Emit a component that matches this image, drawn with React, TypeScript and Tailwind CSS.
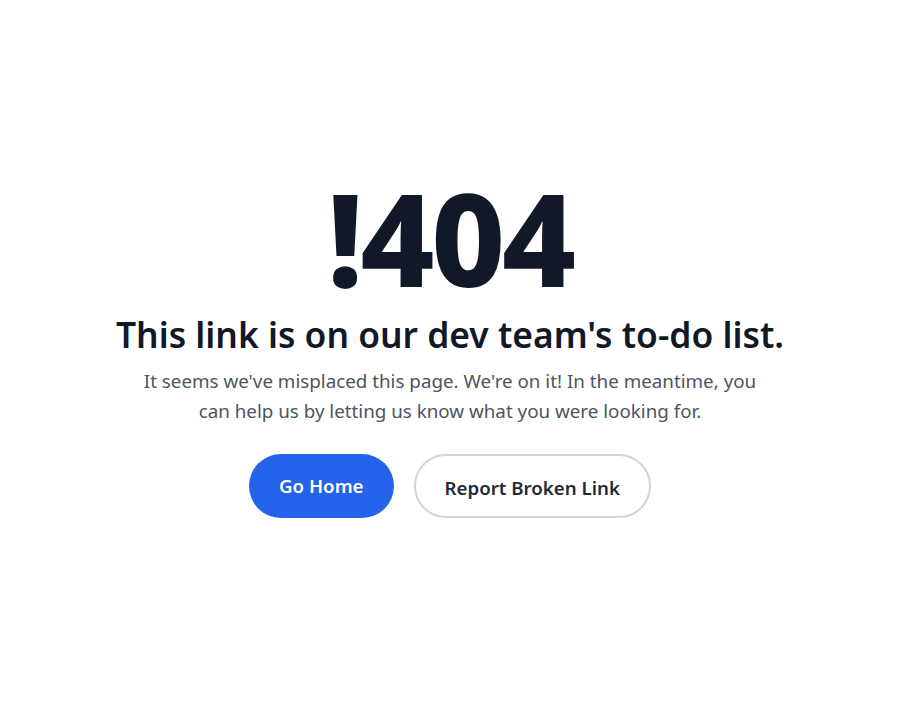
export default function App() {
  return (
    <div className="min-h-screen bg-white flex flex-col items-center justify-center px-6 pb-[28px] text-center font-['Noto_Sans',sans-serif]">
      <h1 className="text-[128px] leading-none font-extrabold text-[#111827] tracking-tight">!404</h1>
      <h2 className="mt-[6px] text-[35.4px] font-semibold text-[#111827]">This link is on our dev team's to-do list.</h2>
      <p className="mt-[5px] max-w-[630px] text-[18.8px] leading-[30px] text-[#4b5563]">
        It seems we've misplaced this page. We're on it! In the meantime, you can help us by letting us know what you were looking for.
      </p>
      <div className="mt-7 flex items-center gap-5">
        <button className="h-16 px-[30px] rounded-full bg-[#2563eb] text-white text-[18.7px] font-semibold">Go Home</button>
        <button className="h-16 px-[29px] pt-1 rounded-full border-2 border-[#d1d5db] text-[#1f2937] text-[18.7px] font-semibold">
          Report Broken Link
        </button>
      </div>
    </div>
  );
}
